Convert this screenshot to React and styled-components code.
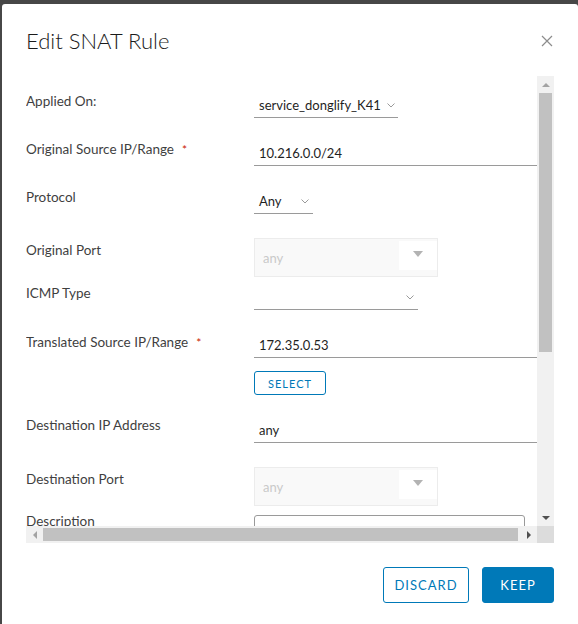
import React from 'react';
import styled, { createGlobalStyle } from 'styled-components';

const GlobalStyle = createGlobalStyle`
  html, body {
    margin: 0;
    padding: 0;
    background: #474747;
    font-family: Lato, "Open Sans", sans-serif;
    overflow: hidden;
  }
`;

const Page = styled.div`
  width: 578px;
  height: 624px;
  padding: 4px 0 0 2px;
  box-sizing: border-box;
  overflow: hidden;
`;

const Modal = styled.div`
  width: 576px;
  height: 620px;
  background: #fff;
  border-radius: 3px 3px 0 0;
  padding: 24px 24px 0 24px;
  box-sizing: border-box;
  display: flex;
  flex-direction: column;
`;

const Header = styled.div`
  height: 26px;
  display: flex;
  align-items: center;
  justify-content: space-between;
  margin-bottom: 22px;
`;

const Title = styled.h3`
  margin: 0;
  font-size: 22px;
  font-weight: 300;
  color: #1b1b1b;
  line-height: 26px;
`;

const CloseBtn = styled.button`
  border: none;
  background: none;
  padding: 0;
  margin-right: 1px;
  width: 12px;
  height: 12px;
  display: flex;
  cursor: pointer;
`;

/* scroll frame: viewport + drawn scrollbars */
const ScrollFrame = styled.div`
  display: grid;
  grid-template-columns: 511px 17px;
  grid-template-rows: 450px 17px;
`;

const Viewport = styled.div`
  overflow: hidden;
`;

const VBar = styled.div`
  background: #f1f1f1;
  display: flex;
  flex-direction: column;
`;

const HBar = styled.div`
  background: #f1f1f1;
  display: flex;
`;

const Corner = styled.div`
  background: #dcdcdc;
`;

const BarButton = styled.div`
  width: 17px;
  height: 17px;
  flex-shrink: 0;
  display: flex;
  align-items: center;
  justify-content: center;
`;

const VTrack = styled.div`
  flex: 1;
  padding: 0 2px;
`;

const VThumb = styled.div`
  height: 259px;
  background: #c1c1c1;
`;

const HTrack = styled.div`
  flex: 1;
  padding: 2px 2px 2px 0;
  display: flex;
`;

const HThumb = styled.div`
  flex: 1;
  background: #c1c1c1;
`;

const Form = styled.div`
  width: 515px;
  padding-top: 18px;
  display: flex;
  flex-direction: column;
`;

const Row = styled.div`
  display: grid;
  grid-template-columns: 228px 1fr;
  align-items: start;
  margin-top: ${({ $gap }) => ($gap != null ? $gap : 24)}px;
`;

const Label = styled.label`
  font-size: 13.5px;
  line-height: 16px;
  color: #3f3f3f;
  margin-top: ${({ $offset }) => $offset || 0}px;
`;

const Required = styled.span`
  color: #c92100;
  margin-left: 8px;
  font-size: 12px;
`;

const Underlined = styled.div`
  height: 24px;
  box-sizing: border-box;
  border-bottom: 1px solid #9a9a9a;
  width: ${({ $w }) => ($w ? `${$w}px` : '100%')};
  display: flex;
  align-items: center;
  justify-content: space-between;
  padding: 0 4px 1px 5px;
  font-size: 13px;
  color: #1f1f1f;
`;

const Chevron = styled.svg`
  width: 8px;
  height: 5px;
  margin-left: 6px;
  flex-shrink: 0;
`;

const Combo = styled.div`
  width: 184px;
  height: 39px;
  box-sizing: border-box;
  border: 1px solid #ececec;
  background: #f9f9f9;
  display: flex;
  align-items: stretch;
`;

const ComboText = styled.span`
  flex: 1;
  font-size: 13px;
  color: #c9c9c9;
  padding-left: 8px;
  display: flex;
  align-items: center;
`;

const ComboDrop = styled.div`
  width: 38px;
  background: #fff;
  margin: 2px 0 6px;
  display: flex;
  justify-content: center;
  padding-top: 10px;
  box-sizing: border-box;
`;

const OutlineButton = styled.button`
  height: ${({ $h }) => $h}px;
  width: ${({ $w }) => $w}px;
  padding: 0;
  border: 1px solid #0079b8;
  border-radius: 3px;
  background: ${({ $fill }) => ($fill ? '#0079b8' : '#fff')};
  color: ${({ $fill }) => ($fill ? '#fff' : '#0079b8')};
  font-family: Lato, "Open Sans", sans-serif;
  font-size: ${({ $fs }) => $fs}px;
  font-weight: 400;
  letter-spacing: 1px;
  cursor: pointer;
`;

const SelectCell = styled.div`
  grid-column: 2;
`;

const TextArea = styled.div`
  width: 271px;
  height: 72px;
  border: 1px solid #9a9a9a;
  border-radius: 3px;
  box-sizing: border-box;
`;

const Footer = styled.div`
  display: flex;
  justify-content: flex-end;
  gap: 13px;
  margin-top: 24px;
`;

const Down = () => (
  <Chevron viewBox="0 0 8 5">
    <polyline points="0.5,0.5 4,4 7.5,0.5" fill="none" stroke="#9a9a9a" strokeWidth="1" />
  </Chevron>
);

const Triangle = () => (
  <svg width="10" height="6" viewBox="0 0 10 6">
    <polygon points="0,0 10,0 5,6" fill="#b3b3b3" />
  </svg>
);

const Arrow = ({ dir, color }) => {
  const pts = {
    up: '0,4 4,0 8,4',
    down: '0,0 8,0 4,4',
    left: '4,0 4,8 0,4',
    right: '0,0 4,4 0,8',
  }[dir];
  const vertical = dir === 'up' || dir === 'down';
  return (
    <svg width={vertical ? 8 : 4} height={vertical ? 4 : 8} viewBox={vertical ? '0 0 8 4' : '0 0 4 8'}>
      <polygon points={pts} fill={color} />
    </svg>
  );
};

const DisabledCombo = () => (
  <Combo>
    <ComboText>any</ComboText>
    <ComboDrop>
      <Triangle />
    </ComboDrop>
  </Combo>
);

const App = () => {
  return (
    <Page>
      <GlobalStyle />
      <Modal>
        <Header>
          <Title>Edit SNAT Rule</Title>
          <CloseBtn aria-label="Close">
            <svg width="12" height="12" viewBox="0 0 12 12">
              <path d="M1 1 L11 11 M11 1 L1 11" stroke="#8c8c8c" strokeWidth="1.2" />
            </svg>
          </CloseBtn>
        </Header>
        <ScrollFrame>
          <Viewport>
            <Form>
              <Row $gap={0}>
                <Label $offset={-1}>Applied On:</Label>
                <Underlined $w={144}>
                  <span>service_donglify_K41</span>
                  <Down />
                </Underlined>
              </Row>
              <Row>
                <Label $offset={-1}>
                  Original Source IP/Range<Required>*</Required>
                </Label>
                <Underlined>10.216.0.0/24</Underlined>
              </Row>
              <Row>
                <Label $offset={-1}>Protocol</Label>
                <Underlined $w={59}>
                  <span>Any</span>
                  <Down />
                </Underlined>
              </Row>
              <Row $gap={24}>
                <Label $offset={4}>Original Port</Label>
                <DisabledCombo />
              </Row>
              <Row $gap={9}>
                <Label $offset={-1}>ICMP Type</Label>
                <Underlined $w={164}>
                  <span />
                  <Down />
                </Underlined>
              </Row>
              <Row>
                <Label $offset={0}>
                  Translated Source IP/Range<Required>*</Required>
                </Label>
                <Underlined>172.35.0.53</Underlined>
              </Row>
              <Row $gap={13}>
                <SelectCell>
                  <OutlineButton type="button" $h={24} $w={72} $fs={11}>
                    SELECT
                  </OutlineButton>
                </SelectCell>
              </Row>
              <Row>
                <Label $offset={-2}>Destination IP Address</Label>
                <Underlined>any</Underlined>
              </Row>
              <Row $gap={24}>
                <Label $offset={4}>Destination Port</Label>
                <DisabledCombo />
              </Row>
              <Row $gap={9}>
                <Label $offset={-2}>Description</Label>
                <TextArea />
              </Row>
            </Form>
          </Viewport>
          <VBar>
            <BarButton>
              <Arrow dir="up" color="#a3a3a3" />
            </BarButton>
            <VTrack>
              <VThumb />
            </VTrack>
            <BarButton>
              <Arrow dir="down" color="#505050" />
            </BarButton>
          </VBar>
          <HBar>
            <BarButton>
              <Arrow dir="left" color="#a3a3a3" />
            </BarButton>
            <HTrack>
              <HThumb />
            </HTrack>
            <BarButton>
              <Arrow dir="right" color="#505050" />
            </BarButton>
          </HBar>
          <Corner />
        </ScrollFrame>
        <Footer>
          <OutlineButton type="button" $h={36} $w={86} $fs={13}>
            DISCARD
          </OutlineButton>
          <OutlineButton type="button" $fill $h={36} $w={72} $fs={13}>
            KEEP
          </OutlineButton>
        </Footer>
      </Modal>
    </Page>
  );
};

export default App;
